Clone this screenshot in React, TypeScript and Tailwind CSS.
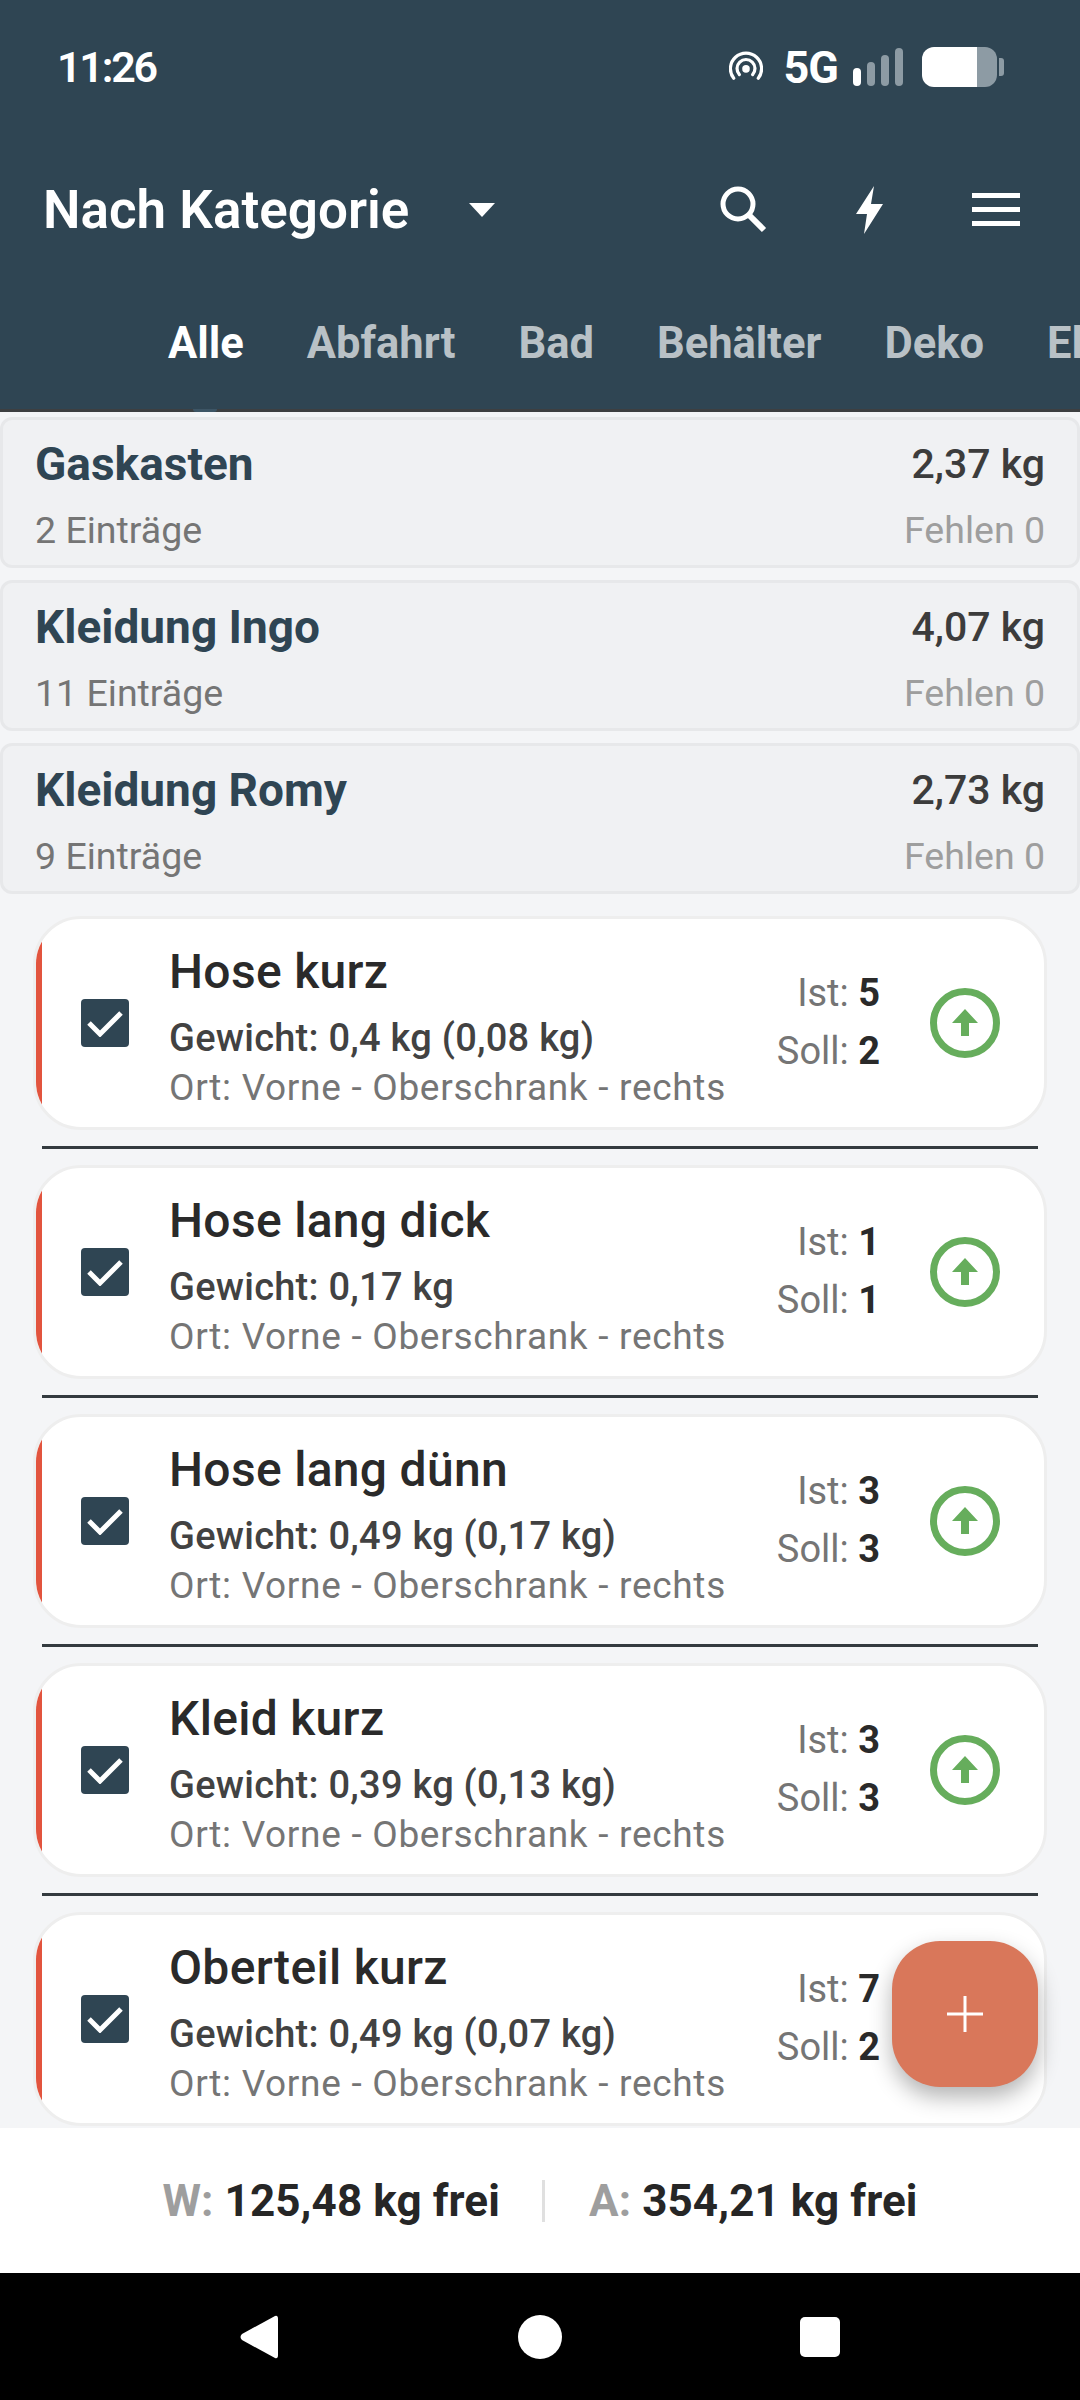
import React from "react";

const groups = [
  { name: "Gaskasten", weight: "2,37 kg", entries: "2 Einträge" },
  { name: "Kleidung Ingo", weight: "4,07 kg", entries: "11 Einträge" },
  { name: "Kleidung Romy", weight: "2,73 kg", entries: "9 Einträge" },
];

const items = [
  { name: "Hose kurz", w: "Gewicht: 0,4 kg (0,08 kg)", ist: 5, soll: 2 },
  { name: "Hose lang dick", w: "Gewicht: 0,17 kg", ist: 1, soll: 1 },
  { name: "Hose lang dünn", w: "Gewicht: 0,49 kg (0,17 kg)", ist: 3, soll: 3 },
  { name: "Kleid kurz", w: "Gewicht: 0,39 kg (0,13 kg)", ist: 3, soll: 3 },
  { name: "Oberteil kurz", w: "Gewicht: 0,49 kg (0,07 kg)", ist: 7, soll: 2 },
];

function StatusIcons() {
  return (
    <div className="flex items-center">
      <svg width="34" height="32" viewBox="0 0 36 32" className="mr-[21px]">
        <g fill="none" stroke="#fff" strokeWidth="3.4" strokeLinecap="round">
          <path d="M5 28 A16.5 16.5 0 1 1 31 28" />
          <path d="M11 24 A9.5 9.5 0 1 1 25 24" />
        </g>
        <circle cx="18" cy="18" r="4" fill="#fff" />
      </svg>
      <span className="text-[45px] leading-none font-bold text-white mr-[15px] tracking-[-1px]">5G</span>
      <svg width="52" height="38" viewBox="0 0 52 38" className="mr-[17px]">
        <rect x="0" y="20" width="8" height="18" rx="4" fill="#fff" />
        <rect x="14" y="14" width="8" height="24" rx="4" fill="#8d9ba4" />
        <rect x="28" y="7" width="8" height="31" rx="4" fill="#8d9ba4" />
        <rect x="42" y="0" width="8" height="38" rx="4" fill="#8d9ba4" />
      </svg>
      <svg width="82" height="40" viewBox="0 0 82 40">
        <path d="M55 0 H63 A12 12 0 0 1 75 12 V28 A12 12 0 0 1 63 40 H55 Z" fill="#8d9ba4" />
        <path d="M12 0 H55 V40 H12 A12 12 0 0 1 0 28 V12 A12 12 0 0 1 12 0 Z" fill="#fff" />
        <path d="M77 11 H79 A3 3 0 0 1 82 14 V26 A3 3 0 0 1 79 29 H77 Z" fill="#8d9ba4" />
      </svg>
    </div>
  );
}

function Header() {
  return (
    <header className="h-[412px] shrink-0 bg-[#2f4553] border-b-[3px] border-[#3d3f41] relative">
      <div className="h-[134px] pl-[57px] pr-[76px] flex items-center justify-between">
        <span className="text-[43px] leading-none font-semibold text-white tracking-[-2.2px]">11:26</span>
        <StatusIcons />
      </div>
      <div className="h-[152px] pl-[43px] pr-[60px] flex items-center">
        <span className="text-[53px] leading-none font-semibold text-white whitespace-nowrap">Nach Kategorie</span>
        <svg width="26" height="14" viewBox="0 0 26 14" className="ml-[60px]">
          <path d="M0 0 H26 L13 14 Z" fill="#fff" />
        </svg>
        <div className="ml-auto flex items-center">
          <svg width="48" height="48" viewBox="0 0 48 48" className="mr-[88px]">
            <circle cx="18" cy="18" r="15" fill="none" stroke="#fff" strokeWidth="5" />
            <path d="M29 29 L44 44" stroke="#fff" strokeWidth="6" />
          </svg>
          <svg width="28" height="48" viewBox="0 0 28 48" className="mr-[88px]">
            <path d="M18 0 L0 28 H11 L8 48 L27 18 H15 Z" fill="#fff" />
          </svg>
          <svg width="48" height="34" viewBox="0 0 48 34">
            <path d="M0 0 H48 V5 H0 Z M0 14 H48 V19 H0 Z M0 28 H48 V33 H0 Z" fill="#fff" />
          </svg>
        </div>
      </div>
      <div className="pl-[168px] flex gap-[63px] text-[43.5px] leading-none font-bold text-[#b9c1c6] overflow-hidden whitespace-nowrap mt-[28px] h-[60px] items-center">
        <span className="text-white">Alle</span>
        <span>Abfahrt</span>
        <span>Bad</span>
        <span>Behälter</span>
        <span>Deko</span>
        <span>El</span>
      </div>
      <div className="absolute left-[193px] bottom-[-3px] w-[24px] h-[3px] bg-[#3d5565] rounded-b-full" />
    </header>
  );
}

function Group({ g }: { g: (typeof groups)[number] }) {
  return (
    <div className="h-[151px] rounded-[12px] border-[3px] border-[#e7e8ea] bg-[#f0f1f3] pl-[32px] pr-[32px] pt-[17px]">
      <div className="flex justify-between items-center h-[54px]">
        <span className="text-[46px] leading-none font-bold text-[#2f4553]">{g.name}</span>
        <span className="text-[41px] leading-none font-medium text-[#3c3c3c]">{g.weight}</span>
      </div>
      <div className="flex justify-between items-center h-[54px] mt-[13px] text-[37.5px] leading-none">
        <span className="text-[#757575]">{g.entries}</span>
        <span className="text-[#9e9e9e]">Fehlen 0</span>
      </div>
    </div>
  );
}

function Item({ it }: { it: (typeof items)[number] }) {
  return (
    <div className="shrink-0">
      <div className="mx-[33px] h-[214px] rounded-[48px] border-[3px] border-[#eeeeee] bg-white overflow-hidden flex items-center">
        <div className="w-[6px] h-full bg-[#e2543e] shrink-0" />
        <div className="w-[48px] h-[48px] ml-[39px] mr-[40px] shrink-0 rounded-[4px] bg-[#2f4553] flex items-center justify-center">
          <svg width="36" height="28" viewBox="0 0 36 28">
            <path d="M2 14 L13 25 L34 4" fill="none" stroke="#fff" strokeWidth="5" />
          </svg>
        </div>
        <div className="flex-1 min-w-0 flex flex-col pt-[8px]">
          <span className="text-[48px] h-[56px] leading-[56px] font-medium text-[#2a2a2a] whitespace-nowrap tracking-[0.3px]">{it.name}</span>
          <span className="text-[38px] h-[44px] leading-[44px] mt-[16px] font-medium text-[#424242] whitespace-nowrap tracking-[0.25px]">{it.w}</span>
          <span className="text-[37px] h-[44px] leading-[44px] mt-[6px] text-[#757575] whitespace-nowrap tracking-[0.7px]">Ort: Vorne - Oberschrank - rechts</span>
        </div>
        <div className="w-[150px] shrink-0 flex flex-col items-end text-[38px] leading-[58px] text-[#757575] pb-[2px]">
          <span>Ist: <b className="font-bold text-[#2a2a2a]">{it.ist}</b></span>
          <span>Soll: <b className="font-bold text-[#2a2a2a]">{it.soll}</b></span>
        </div>
        <svg width="70" height="70" viewBox="0 0 70 70" className="ml-[50px] mr-[44px] shrink-0">
          <circle cx="35" cy="35" r="31.5" fill="none" stroke="#66ad5c" strokeWidth="7" />
          <path d="M35 21 L48 35 H39 V48 H31 V35 H22 Z" fill="#66ad5c" />
        </svg>
      </div>
    </div>
  );
}

export default function App() {
  return (
    <div className="w-[1080px] h-[2400px] flex flex-col bg-[#f4f5f7] overflow-hidden relative [font-family:Roboto,sans-serif]">
      <Header />
      <main className="flex-1 min-h-0 overflow-hidden">
        <div className="pt-[5px] flex flex-col gap-[12px]">
          {groups.map((g) => (
            <Group key={g.name} g={g} />
          ))}
        </div>
        <div className="pt-[22px] flex flex-col">
          {items.map((it, i) => (
            <React.Fragment key={it.name}>
              <Item it={it} />
              {i < items.length - 1 && <div className="mx-[42px] h-[3px] bg-[#333a3f] my-[16px] shrink-0" />}
            </React.Fragment>
          ))}
        </div>
      </main>
      <div className="h-[145px] shrink-0 bg-white flex items-center justify-center text-[44px] leading-none font-bold tracking-[0.1px]">
        <span className="text-[#9e9e9e]">W:&nbsp;<span className="text-[#262626]">125,48 kg frei</span></span>
        <div className="w-[3px] h-[42px] bg-[#e0e0e0] ml-[42px] mr-[44px]" />
        <span className="text-[#9e9e9e]">A:&nbsp;<span className="text-[#262626]">354,21 kg frei</span></span>
      </div>
      <nav className="h-[127px] shrink-0 bg-black flex items-center">
        <svg width="40" height="46" viewBox="0 0 40 46" className="ml-[239px]">
          <path d="M36 2 Q39 1 39 5 V41 Q39 45 36 44 L3 26 Q0 23 3 20 Z" fill="#fff" />
        </svg>
        <div className="w-[44px] h-[44px] rounded-full bg-white ml-[239px]" />
        <div className="w-[40px] h-[40px] rounded-[5px] bg-white ml-[238px]" />
      </nav>
      <button className="absolute left-[892px] top-[1941px] w-[146px] h-[146px] rounded-[48px] bg-[#d9775a] shadow-[0_10px_22px_rgba(0,0,0,0.3)] flex items-center justify-center">
        <svg width="36" height="36" viewBox="0 0 36 36">
          <path d="M16.5 0 H19.5 V16.5 H36 V19.5 H19.5 V36 H16.5 V19.5 H0 V16.5 H16.5 Z" fill="#fff" />
        </svg>
      </button>
    </div>
  );
}
